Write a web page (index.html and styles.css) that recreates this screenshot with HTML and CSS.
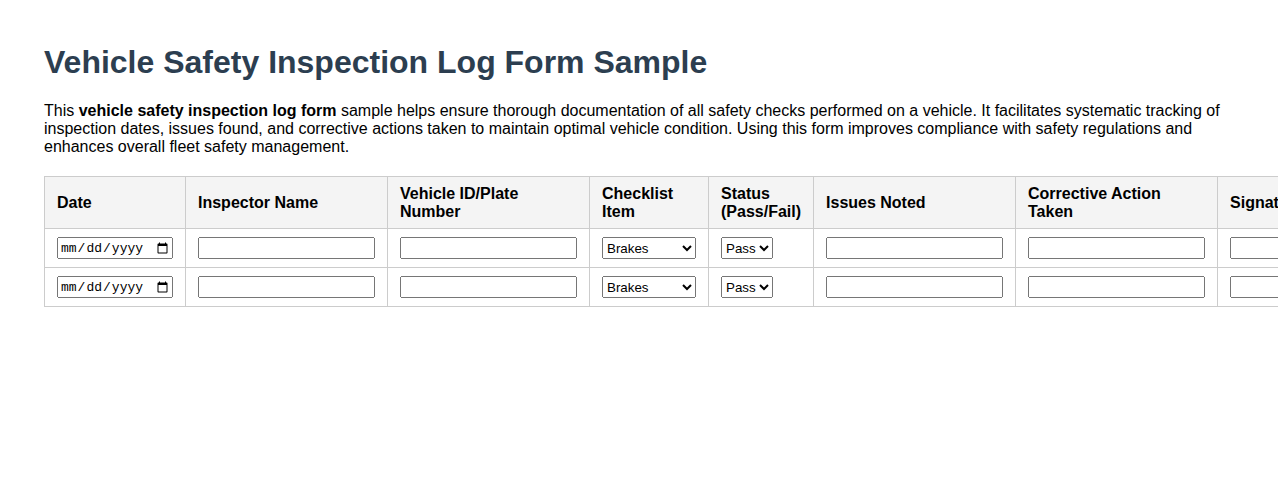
FILE: index.html
```html
<!DOCTYPE html>
<html lang="en">
<head>
<meta charset="utf-8">
<title>Vehicle Safety Inspection Log Form Sample</title>
<link rel="stylesheet" href="styles.css">
</head>
<body>
<div class="page">
  <h1 class="title">Vehicle Safety Inspection Log Form Sample</h1>
  <p class="intro">This <strong>vehicle safety inspection log form</strong> sample helps ensure thorough documentation of all safety checks performed on a vehicle. It facilitates systematic tracking of inspection dates, issues found, and corrective actions taken to maintain optimal vehicle condition. Using this form improves compliance with safety regulations and enhances overall fleet safety management.</p>
  <table class="log">
    <thead>
      <tr>
        <th>Date</th>
        <th>Inspector Name</th>
        <th>Vehicle ID/Plate Number</th>
        <th>Checklist Item</th>
        <th>Status (Pass/Fail)</th>
        <th>Issues Noted</th>
        <th>Corrective Action Taken</th>
        <th>Signature</th>
      </tr>
    </thead>
    <tbody>
      <tr>
        <td><input class="f-date" type="date"></td>
        <td><input class="f-text" type="text"></td>
        <td><input class="f-text" type="text"></td>
        <td><select class="f-item"><option>Brakes</option><option>Lights</option><option>Tires</option><option>Steering</option><option>Suspension</option></select></td>
        <td><select class="f-status"><option>Pass</option><option>Fail</option></select></td>
        <td><input class="f-text" type="text"></td>
        <td><input class="f-text" type="text"></td>
        <td><input class="f-text" type="text"></td>
      </tr>
      <tr>
        <td><input class="f-date" type="date"></td>
        <td><input class="f-text" type="text"></td>
        <td><input class="f-text" type="text"></td>
        <td><select class="f-item"><option>Brakes</option><option>Lights</option><option>Tires</option><option>Steering</option><option>Suspension</option></select></td>
        <td><select class="f-status"><option>Pass</option><option>Fail</option></select></td>
        <td><input class="f-text" type="text"></td>
        <td><input class="f-text" type="text"></td>
        <td><input class="f-text" type="text"></td>
      </tr>
    </tbody>
  </table>
</div>
</body>
</html>
```
FILE: styles.css
```css
html, body {
  overflow: hidden;
}
body {
  margin: 0;
  font-family: "Liberation Sans", Arial, sans-serif;
  color: #000;
  background: #fff;
}
.page {
  padding: 23px 44px 20px;
}
.title {
  font-size: 32px;
  font-weight: bold;
  color: #2c3e50;
  margin: 21px 0 21px;
}
.intro {
  font-size: 16px;
  line-height: 18px;
  margin: 0 0 20px;
}
.log {
  border-collapse: collapse;
  width: 100%;
}
.log th, .log td {
  border: 1px solid #ccc;
  padding: 8px 12px;
  text-align: left;
}
.log th {
  background: #f4f4f4;
  font-size: 16px;
  line-height: 18px;
  padding-bottom: 7px;
  font-weight: bold;
}
.log input, .log select {
  box-sizing: border-box;
  height: 22px;
  font-family: "Liberation Sans", Arial, sans-serif;
  font-size: 13.333px;
  margin: 0;
  vertical-align: middle;
}
.log .f-date {
  width: 116px;
  font-family: "Liberation Mono", "DejaVu Sans Mono", monospace;
  font-size: 13px;
}
.f-text { width: 177px; }
.f-item { width: 94px; }
.f-status { width: 52px; }
```
